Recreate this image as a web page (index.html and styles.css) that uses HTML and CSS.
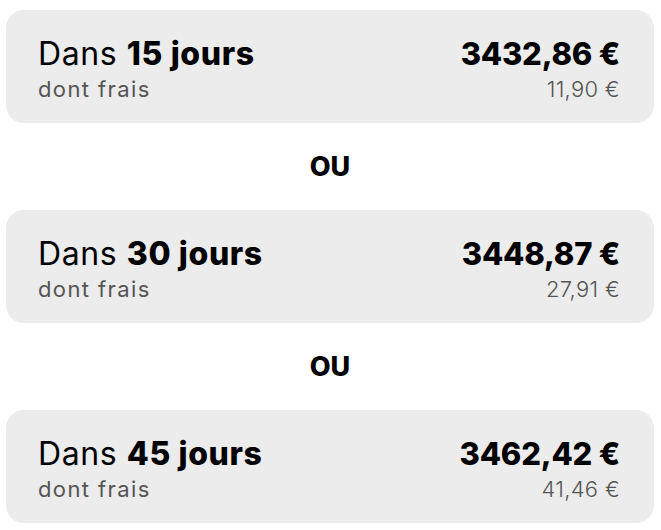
FILE: index.html
```html
<!DOCTYPE html>
<html lang="fr">
<head>
<meta charset="utf-8">
<link rel="stylesheet" href="styles.css">
</head>
<body>
<main class="options">
  <div class="card">
    <div class="col">
      <div class="title">Dans <strong>15 jours</strong></div>
      <div class="sub label">dont frais</div>
    </div>
    <div class="col right">
      <div class="amount">3432,86 €</div>
      <div class="sub fee">11,90 €</div>
    </div>
  </div>
  <div class="or">OU</div>
  <div class="card">
    <div class="col">
      <div class="title">Dans <strong>30 jours</strong></div>
      <div class="sub label">dont frais</div>
    </div>
    <div class="col right">
      <div class="amount">3448,87 €</div>
      <div class="sub fee">27,91 €</div>
    </div>
  </div>
  <div class="or">OU</div>
  <div class="card">
    <div class="col">
      <div class="title">Dans <strong>45 jours</strong></div>
      <div class="sub label">dont frais</div>
    </div>
    <div class="col right">
      <div class="amount">3462,42 €</div>
      <div class="sub fee">41,46 €</div>
    </div>
  </div>
</main>
</body>
</html>
```
FILE: styles.css
```css
html, body {
  margin: 0;
  padding: 0;
  background: #ffffff;
}
body {
  font-family: "Inter", "Noto Sans", sans-serif;
  color: #000;
}
.options {
  padding: 10px 7px 0 6px;
  display: flex;
  flex-direction: column;
}
.card {
  background: #ececec;
  border-radius: 18px;
  height: 113px;
  box-sizing: border-box;
  padding: 24px 34px 0 32px;
  display: flex;
  justify-content: space-between;
}
.col {
  display: flex;
  flex-direction: column;
}
.right {
  align-items: flex-end;
}
.title, .amount {
  font-size: 31px;
  line-height: 40px;
  font-weight: 400;
}
.title {
  font-size: 32px;
  letter-spacing: 0.6px;
}
.title strong {
  font-weight: 800;
}
.amount {
  font-weight: 800;
  letter-spacing: -0.2px;
}
.sub {
  font-size: 22px;
  line-height: 30px;
  color: #555555;
  font-weight: 300;
}
.label {
  font-weight: 400;
  letter-spacing: 1.4px;
}
.fee {
  letter-spacing: 0.3px;
}
.or {
  height: 87px;
  display: flex;
  align-items: center;
  justify-content: center;
  font-size: 27px;
  font-weight: 800;
}
```
